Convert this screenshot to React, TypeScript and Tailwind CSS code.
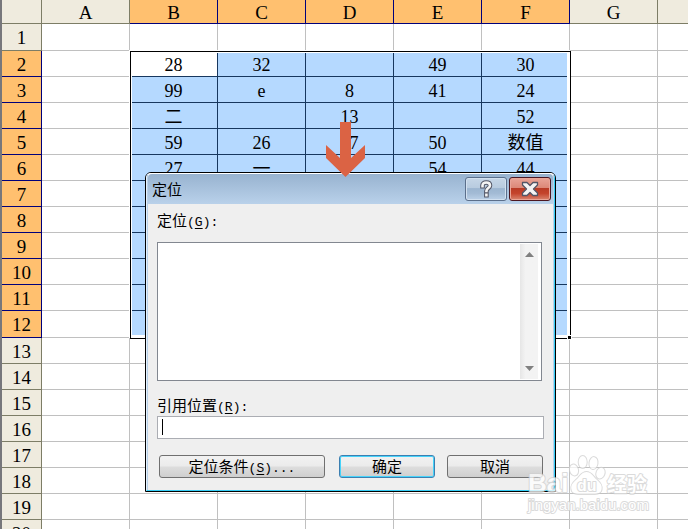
import { clsx } from 'clsx';

const columns = ['A', 'B', 'C', 'D', 'E', 'F', 'G', ''];

const rows: Record<number, Record<string, string>> = {
  2: { B: '28', C: '32', E: '49', F: '30' },
  3: { B: '99', C: 'e', D: '8', E: '41', F: '24' },
  4: { B: '二', D: '13', F: '52' },
  5: { B: '59', C: '26', D: '17', E: '50', F: '数值' },
  6: { B: '27', C: '一', E: '54', F: '44' },
};

const rowNumbers = Array.from({ length: 20 }, (_, i) => i + 1);

const isColSelected = (col: string) => col !== '' && 'BCDEF'.includes(col);
const isRowSelected = (row: number) => row >= 2 && row <= 12;

const headerColors = (selected: boolean) =>
  selected
    ? 'border-[#00007b] bg-[#ffc06f]'
    : 'border-[#7d7d66] bg-[#efebde]';

const Sheet = () => (
  <table className="w-full table-fixed border-separate border-spacing-0 text-center text-lg/6 text-black">
    <colgroup>
      <col className="w-[40px]" />
      {columns.map((col) => (
        <col key={col} className={col ? 'w-[88px]' : undefined} />
      ))}
    </colgroup>
    <thead>
      <tr className="h-6">
        <th className="border-r border-b border-[#7d7d66] bg-[#efebde] p-0" />
        {columns.map((col) => (
          <th
            key={col}
            scope="col"
            className={clsx(
              'h-6 border-b p-0 pt-0.5 text-[19px]/5 font-normal',
              col && 'border-r',
              headerColors(isColSelected(col))
            )}
          >
            {col}
          </th>
        ))}
      </tr>
    </thead>
    <tbody>
      {rowNumbers.map((row) => (
        <tr key={row}>
          <th
            scope="row"
            className={clsx(
              'border-r border-b p-0 pt-0.5 text-[19px]/5 font-normal',
              row === 1 || row === 12 ? 'h-[27px]' : 'h-[26px]',
              headerColors(isRowSelected(row))
            )}
          >
            {row}
          </th>
          {columns.map((col) => {
            const selected = isColSelected(col) && isRowSelected(row);
            const active = col === 'B' && row === 2;
            return (
              <td
                key={col}
                className={clsx(
                  'border-b p-0 pt-0.5 leading-5',
                  col && 'border-r',
                  selected ? 'border-[#17375e]' : 'border-[#c0c0c0]',
                  selected && !active ? 'bg-[#b5d9ff]' : 'bg-white'
                )}
              >
                {rows[row]?.[col]}
              </td>
            );
          })}
        </tr>
      ))}
    </tbody>
  </table>
);

// Outline of the selected range B2:F12 with the fill handle in the corner
const SelectionFrame = () => (
  <div className="pointer-events-none absolute top-[51px] left-[130px] h-[288px] w-[441px] border border-black shadow-[-1px_-1px_0_#fff]">
    <div className="h-full border-t border-r-3 border-b-3 border-l border-white" />
    <span className="absolute -right-0.5 -bottom-0.5 size-[5px] border border-white bg-black" />
  </div>
);

const helpPath =
  'M4.500 6.200V5.500c0-2 1.500-3 3.700-3s3.800 1 3.800 3c0 2.600-3.600 2.600-3.600 5.500M8.400 14.800v.4';

const HelpIcon = () => (
  <svg viewBox="0 0 16 18" className="h-[18px] w-4" fill="none">
    <path
      d={helpPath}
      stroke="#535666"
      strokeWidth="4.600"
      strokeLinecap="square"
    />
    <path
      d={helpPath}
      stroke="#f4f4f4"
      strokeWidth="2.600"
      strokeLinecap="square"
    />
  </svg>
);

const CloseIcon = () => (
  <svg viewBox="0 0 18 16" className="h-4 w-[18px]">
    <path
      d="M1.500 1.500H6L9 4.500 12 1.500h4.500V4L12.500 8l4 4v2.500H12L9 11.500 6 14.500H1.500V12l4-4-4-4z"
      fill="#f4f4f4"
      stroke="#535666"
      strokeWidth="1.300"
      strokeLinejoin="round"
    />
  </svg>
);

interface HotkeyProps {
  text: string;
  hotkey: string;
  suffix: string;
}

const HotkeyText = ({ text, hotkey, suffix }: HotkeyProps) => (
  <>
    {text}
    <span className="font-['Liberation_Mono',monospace] text-[13px]">
      (<u className="underline-offset-2">{hotkey}</u>){suffix}
    </span>
  </>
);

const buttonBase =
  'h-[23px] rounded-[3px] border bg-[linear-gradient(#f2f2f2,#ebebeb_48%,#dddddd_52%,#cfcfcf)] pb-0.5 text-[15px]/5 text-black';

const GoToDialog = () => (
  <div
    role="dialog"
    aria-labelledby="dialog-title"
    className="absolute top-[172px] left-[145px] w-[411px] rounded-t-md border border-black bg-[#efefef] font-['Noto_Sans_CJK_SC',sans-serif] text-[15px]/5 text-black"
  >
    <div className="rounded-t-[5px] border border-t-white border-r-[#35cdf5] border-b-[#35cdf5] border-l-[#e4f1fc]">
      <div className="border-x border-[#b9d1ea]">
        <header className="flex h-[30px] items-center gap-0.5 rounded-t bg-linear-to-b from-[#98b3d0] to-[#b9d1ea] pr-0.5 pl-1">
          <h1 id="dialog-title" className="grow">
            定位
          </h1>
          <button
            type="button"
            aria-label="帮助"
            className="flex h-6 w-[42px] items-center justify-center rounded-[3px] border border-[#5b6f8b] bg-[linear-gradient(#c6d6e7,#b8cbdf_45%,#9cb5d0_48%,#a3bbd5_70%,#bcd1e8)] inset-shadow-[0_0_0_1px_#d3e1f0]"
          >
            <HelpIcon />
          </button>
          <button
            type="button"
            aria-label="关闭"
            className="flex h-6 w-[42px] items-center justify-center rounded-[3px] border border-[#4c1620] bg-[linear-gradient(#e9a598,#dc8877_45%,#b83b25_46%,#c4432c_70%,#d98570)] inset-shadow-[0_0_0_1px_#e9a598]"
          >
            <CloseIcon />
          </button>
        </header>
        <form
          className="px-[9px] pt-1.5 pb-3"
          onSubmit={(e) => e.preventDefault()}
        >
          <label htmlFor="places" className="block h-8">
            <HotkeyText text="定位" hotkey="G" suffix=":" />
          </label>
          <div className="mr-0.5 flex h-[139px] border border-[#828790] bg-white p-px">
            <select
              id="places"
              size={7}
              className="h-full min-w-0 grow appearance-none bg-white outline-none"
            />
            <div className="flex w-5 flex-col items-center justify-between border-r-2 border-white bg-linear-to-r from-[#e6e6e6] to-[#f3f3f3] to-30% py-2">
              <svg viewBox="0 0 9 5" className="h-[5px] w-[9px]">
                <path d="M0 5 4.500 0 9 5z" fill="#808080" />
              </svg>
              <svg viewBox="0 0 9 5" className="h-[5px] w-[9px]">
                <path d="M0 0 4.500 5 9 0z" fill="#808080" />
              </svg>
            </div>
          </div>
          <label htmlFor="reference" className="mt-3.5 block h-[21px]">
            <HotkeyText text="引用位置" hotkey="R" suffix=":" />
          </label>
          <div className="relative">
            <input
              id="reference"
              type="text"
              className="block h-[23px] w-full border border-[#abadb3] bg-white px-1 caret-transparent outline-none"
            />
            <span className="pointer-events-none absolute top-[3px] left-[5px] h-4 w-px bg-black" />
          </div>
          <div className="mt-4 flex justify-between pr-px pl-0.5">
            <button
              type="button"
              className={clsx(buttonBase, 'w-[166px] border-[#707070]')}
            >
              <HotkeyText text="定位条件" hotkey="S" suffix="..." />
            </button>
            <div className="flex gap-3">
              <button
                type="submit"
                className={clsx(
                  buttonBase,
                  'w-24 border-[#3c7fb1] inset-shadow-[0_0_0_1px_#46d3fa]'
                )}
              >
                确定
              </button>
              <button
                type="button"
                className={clsx(buttonBase, 'w-24 border-[#707070]')}
              >
                取消
              </button>
            </div>
          </div>
        </form>
      </div>
    </div>
  </div>
);

const Arrow = () => (
  <svg
    viewBox="0 0 39 55"
    className="pointer-events-none absolute top-[122px] left-[326px] h-[55px] w-[39px]"
  >
    <path d="M14 0h11v36l14-13v13L19.500 55 0 36V23l14 13z" fill="#db6344" />
  </svg>
);

const Watermark = () => (
  <svg
    viewBox="0 0 130 62"
    className="pointer-events-none absolute top-[453px] left-[525px] h-[62px] w-[130px] font-['Liberation_Sans','Noto_Sans_CJK_SC',sans-serif] opacity-75"
    fill="#fff"
    stroke="#cfcfcf"
    strokeWidth="1"
    paintOrder="stroke"
    strokeLinejoin="round"
  >
    <text x="3" y="39" fontSize="26" fontWeight="bold" strokeWidth="2">
      Bai
    </text>
    <g strokeWidth="2">
      <ellipse cx="49" cy="17" rx="4" ry="5.500" transform="rotate(-15 49 17)" />
      <ellipse cx="57.700" cy="9" rx="4" ry="6" />
      <ellipse cx="68.500" cy="10" rx="4" ry="6" transform="rotate(8 68 10)" />
      <ellipse cx="75.500" cy="20" rx="4" ry="5.500" transform="rotate(20 75 20)" />
      <path d="M61.500 19c5 0 6 4 10 7.500 4 3.500 6 6 5 10-1 5-6 4.500-15 4.500s-14 .5-15-4.500c-1-4 1-6.500 5-10 4-3.500 5-7.500 10-7.500z" />
    </g>
    <text x="52" y="38" fontSize="16" fontWeight="bold" strokeWidth="2">
      du
    </text>
    <text x="82" y="39" fontSize="20" fontWeight="bold" strokeWidth="2">
      经验
    </text>
    <text x="3" y="57" fontSize="15" strokeWidth="2">
      jingyan.baidu.com
    </text>
  </svg>
);

const App = () => (
  <main className="relative h-screen overflow-hidden border-l-2 border-[#77777b] bg-white font-['Liberation_Serif','Noto_Sans_CJK_SC',serif]">
    <div className="relative -ml-0.5 pl-0.5">
      <Sheet />
      <SelectionFrame />
      <GoToDialog />
      <Arrow />
      <Watermark />
    </div>
  </main>
);

export default App;
